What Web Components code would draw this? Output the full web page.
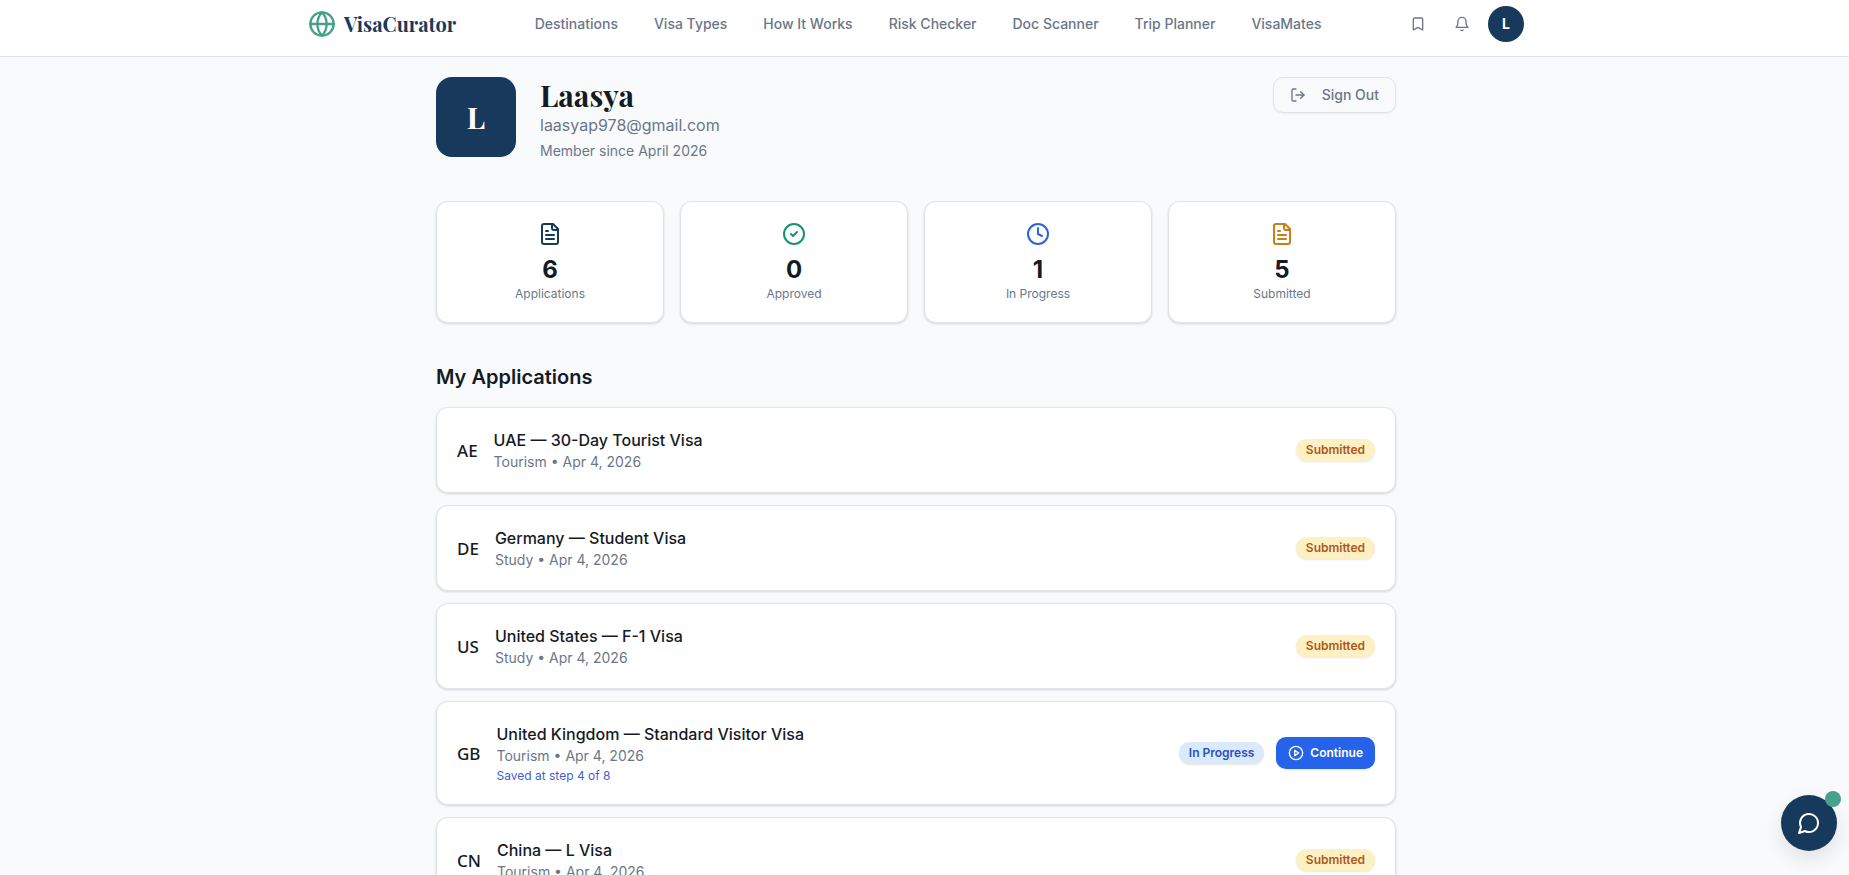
<!DOCTYPE html>
<html lang="en">
<head>
<meta charset="utf-8">
<meta name="viewport" content="width=device-width, initial-scale=1">
<title>VisaCurator – Profile</title>
<style>
  :root {
    --bg: #f9fafc;
    --card: #ffffff;
    --ink: #141b25;
    --muted: #697789;
    --navy: #17395b;
    --line: #e0e3e8;
    --teal: #45a18a;
    --blue: #2563eb;
    --serif: "Playfair Display", "Liberation Serif", serif;
    --shadow: 0 1px 3px rgb(0 0 0 / .1), 0 1px 2px rgb(0 0 0 / .06);
  }
  body {
    margin: 0;
    background: var(--bg);
    color: var(--ink);
    font: 16px/24px Inter, "Noto Sans", sans-serif;
  }
</style>
</head>
<body>
<app-shell>
  <site-header slot="header"></site-header>
  <profile-header name="Laasya" email="laasyap978@gmail.com" since="April 2026"></profile-header>
  <stat-grid>
    <stat-card icon="file" value="6" style="--tone:#17395b">Applications</stat-card>
    <stat-card icon="check" value="0" style="--tone:#12976a">Approved</stat-card>
    <stat-card icon="clock" value="1" style="--tone:#2f63db">In Progress</stat-card>
    <stat-card icon="file" value="5" style="--tone:#cb7d16">Submitted</stat-card>
  </stat-grid>
  <application-list heading="My Applications">
    <application-row code="AE" kind="Tourism" date="Apr 4, 2026">UAE — 30-Day Tourist Visa
      <status-badge slot="status">Submitted</status-badge></application-row>
    <application-row code="DE" kind="Study" date="Apr 4, 2026">Germany — Student Visa
      <status-badge slot="status">Submitted</status-badge></application-row>
    <application-row code="US" kind="Study" date="Apr 4, 2026">United States — F-1 Visa
      <status-badge slot="status">Submitted</status-badge></application-row>
    <application-row code="GB" kind="Tourism" date="Apr 4, 2026" note="Saved at step 4 of 8">United Kingdom — Standard Visitor Visa
      <status-badge slot="status" tone="progress">In Progress</status-badge>
      <continue-button slot="status">Continue</continue-button></application-row>
    <application-row code="CN" kind="Tourism" date="Apr 4, 2026">China — L Visa
      <status-badge slot="status">Submitted</status-badge></application-row>
  </application-list>
  <chat-launcher slot="overlay"></chat-launcher>
</app-shell>

<script>
const ICONS = {
  globe: '<circle cx="12" cy="12" r="10"/><path d="M12 2a14.5 14.5 0 0 0 0 20 14.5 14.5 0 0 0 0-20"/><path d="M2 12h20"/>',
  bookmark: '<path d="m19 21-7-4-7 4V5a2 2 0 0 1 2-2h10a2 2 0 0 1 2 2v16z"/>',
  bell: '<path d="M10.3 21a1.94 1.94 0 0 0 3.4 0"/><path d="M6 8a6 6 0 0 1 12 0c0 7 3 9 3 9H3s3-2 3-9"/>',
  logout: '<path d="M9 21H5a2 2 0 0 1-2-2V5a2 2 0 0 1 2-2h4"/><path d="m16 17 5-5-5-5"/><path d="M21 12H9"/>',
  file: '<path d="M15 2H6a2 2 0 0 0-2 2v16a2 2 0 0 0 2 2h12a2 2 0 0 0 2-2V7Z"/><path d="M14 2v4a2 2 0 0 0 2 2h4"/><path d="M10 9H8"/><path d="M16 13H8"/><path d="M16 17H8"/>',
  check: '<circle cx="12" cy="12" r="10"/><path d="m9 12 2 2 4-4"/>',
  clock: '<circle cx="12" cy="12" r="10"/><path d="M12 6v6l4 2"/>',
  play: '<circle cx="12" cy="12" r="10"/><path d="m10 8 6 4-6 4z"/>',
  chat: '<path d="M7.9 20A9 9 0 1 0 4 16.1L2 22Z"/>'
};

class BaseElement extends HTMLElement {
  connectedCallback() {
    if (this.shadowRoot) return;
    this.attachShadow({ mode: 'open' }).innerHTML =
      `<style>*{box-sizing:border-box}button{font:inherit;margin:0;cursor:pointer}${this.css()}</style>${this.html()}`;
  }
  css() { return ''; }
  html() { return '<slot></slot>'; }
  attr(name) { return this.getAttribute(name) || ''; }
}

customElements.define('ui-icon', class extends BaseElement {
  css() { return `:host{display:block;flex:none;width:var(--size,16px);height:var(--size,16px)}svg{display:block;width:100%;height:100%}`; }
  html() {
    return `<svg viewBox="0 0 24 24" fill="none" stroke="currentColor" stroke-width="2" stroke-linecap="round" stroke-linejoin="round" aria-hidden="true">${ICONS[this.attr('name')]}</svg>`;
  }
});

customElements.define('app-shell', class extends BaseElement {
  css() {
    return `
    :host{display:flex;flex-direction:column;height:100vh;box-sizing:border-box;border-bottom:1px solid #cfd1d5}
    .scroll{flex:1;min-height:0;overflow-y:auto;scrollbar-width:none;padding-right:17px}
    main{max-width:960px;margin:0 auto;padding:20px 0 40px;display:flex;flex-direction:column;gap:40px}`;
  }
  html() {
    return `<slot name="header"></slot><div class="scroll"><main><slot></slot></main></div><slot name="overlay"></slot>`;
  }
});

customElements.define('site-header', class extends BaseElement {
  css() {
    return `
    :host{display:block;flex:none;background:#fff;border-bottom:1px solid var(--line);padding:0 17px 8px 0}
    .bar{max-width:1216px;height:48px;margin:0 auto;display:flex;align-items:center;justify-content:space-between}
    a{color:inherit;text-decoration:none}
    .brand{display:flex;align-items:center;gap:8px;color:var(--navy);font:700 20px/28px var(--serif)}
    .brand ui-icon{--size:28px;color:var(--teal)}
    nav{display:flex;gap:36px;font-size:14px;line-height:20px;font-weight:500;color:var(--muted)}
    .actions{display:flex;align-items:center;gap:8px}
    button{width:36px;height:36px;padding:0;border:0;border-radius:50%;background:none;color:var(--muted);display:grid;place-items:center}
    .me{background:var(--navy);color:#fff;font-size:14px;font-weight:700;line-height:20px}`;
  }
  html() {
    const links = ['Destinations', 'Visa Types', 'How It Works', 'Risk Checker', 'Doc Scanner', 'Trip Planner', 'VisaMates'];
    return `<div class="bar">
      <a class="brand" href="#"><ui-icon name="globe"></ui-icon><span>VisaCurator</span></a>
      <nav>${links.map(l => `<a href="#">${l}</a>`).join('')}</nav>
      <div class="actions">
        <button aria-label="Bookmarks"><ui-icon name="bookmark"></ui-icon></button>
        <button aria-label="Notifications"><ui-icon name="bell"></ui-icon></button>
        <button class="me">L</button>
      </div></div>`;
  }
});

customElements.define('profile-header', class extends BaseElement {
  css() {
    return `
    :host{display:flex;align-items:flex-start;gap:24px}
    .avatar{width:80px;height:80px;border-radius:16px;background:var(--navy);color:#fff;display:grid;place-items:center;font:700 30px/36px var(--serif)}
    .who{flex:1}
    h1{margin:0;font:700 30px/36px var(--serif)}
    p{margin:0;color:var(--muted)}
    .since{margin-top:4px;font-size:14px;line-height:20px}
    button{display:flex;align-items:center;gap:16px;height:36px;padding:0 16px;border:1px solid var(--line);border-radius:10px;background:var(--bg);color:var(--muted);font-size:14px;line-height:20px;font-weight:500;box-shadow:0 1px 2px rgb(0 0 0 / .05)}`;
  }
  html() {
    const name = this.attr('name');
    return `<div class="avatar">${name[0]}</div>
      <div class="who"><h1>${name}</h1><p>${this.attr('email')}</p><p class="since">Member since ${this.attr('since')}</p></div>
      <button><ui-icon name="logout"></ui-icon><span>Sign Out</span></button>`;
  }
});

customElements.define('stat-grid', class extends BaseElement {
  css() { return `:host{display:grid;grid-template-columns:repeat(4,1fr);gap:16px}`; }
});

customElements.define('stat-card', class extends BaseElement {
  css() {
    return `
    :host{display:flex;flex-direction:column;align-items:center;padding:20px;border:1px solid var(--line);border-radius:12px;background:var(--card);box-shadow:var(--shadow)}
    ui-icon{--size:24px;color:var(--tone);margin-bottom:8px}
    .value{font-size:24px;line-height:32px;font-weight:700}
    .label{font-size:12px;line-height:16px;color:var(--muted)}`;
  }
  html() {
    return `<ui-icon name="${this.attr('icon')}"></ui-icon><div class="value">${this.attr('value')}</div><div class="label"><slot></slot></div>`;
  }
});

customElements.define('application-list', class extends BaseElement {
  css() {
    return `
    :host{display:block}
    h2{margin:0 0 16px;font-size:20px;line-height:28px;font-weight:600}
    .rows{display:flex;flex-direction:column;gap:12px}`;
  }
  html() { return `<h2>${this.attr('heading')}</h2><div class="rows"><slot></slot></div>`; }
});

customElements.define('application-row', class extends BaseElement {
  css() {
    return `
    :host{display:flex;align-items:center;gap:16px;padding:20px;border:1px solid var(--line);border-radius:12px;background:var(--card);box-shadow:var(--shadow)}
    .code{font-size:24px;line-height:32px}
    .code span{font-family:"Noto Sans",sans-serif;font-size:17px;font-weight:500}
    .info{flex:1;min-width:0}
    h3{margin:0;font-size:16px;line-height:24px;font-weight:500}
    .meta{font-size:14px;line-height:20px;color:var(--muted)}
    .note{margin-top:2px;font-size:12px;line-height:16px;color:#3b62d6}
    .status{display:flex;align-items:center;gap:12px}`;
  }
  html() {
    const note = this.attr('note');
    return `<div class="code"><span>${this.attr('code')}</span></div>
      <div class="info"><h3><slot></slot></h3><div class="meta">${this.attr('kind')} • ${this.attr('date')}</div>${note ? `<div class="note">${note}</div>` : ''}</div>
      <div class="status"><slot name="status"></slot></div>`;
  }
});

customElements.define('status-badge', class extends BaseElement {
  css() {
    return `
    :host{display:block;padding:3px 10px;border-radius:11px;background:#fdf1c4;color:#ae5716;font-size:12px;line-height:16px;font-weight:600;box-shadow:0 1px 2px rgb(0 0 0 / .1)}
    :host([tone=progress]){background:#dbe9fd;color:#2c50be}`;
  }
});

customElements.define('continue-button', class extends BaseElement {
  css() {
    return `
    :host{display:block}
    button{display:flex;align-items:center;gap:6px;height:32px;padding:0 12px;border:0;border-radius:10px;background:var(--blue);color:#fff;font-size:12px;line-height:16px;font-weight:600;box-shadow:0 1px 2px rgb(0 0 0 / .1)}`;
  }
  html() { return `<button><ui-icon name="play"></ui-icon><span><slot></slot></span></button>`; }
});

customElements.define('chat-launcher', class extends BaseElement {
  css() {
    return `
    :host{position:fixed;right:12px;bottom:25px}
    button{display:grid;place-items:center;width:56px;height:56px;padding:0;border:0;border-radius:50%;background:var(--navy);color:#fff;box-shadow:0 8px 20px rgb(0 0 0 / .1)}
    ui-icon{--size:24px}
    .dot{position:absolute;top:-4px;right:-4px;width:16px;height:16px;border-radius:50%;background:var(--teal)}`;
  }
  html() { return `<button aria-label="Open chat"><ui-icon name="chat"></ui-icon></button><span class="dot"></span>`; }
});
</script>
</body>
</html>
